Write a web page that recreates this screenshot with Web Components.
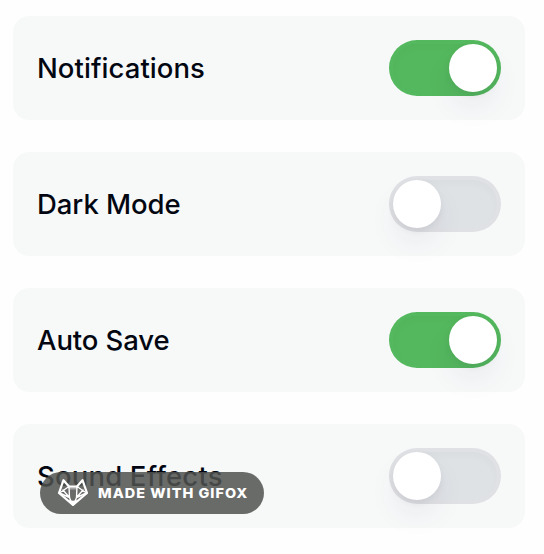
<!DOCTYPE html>
<html lang="en">
<head>
<meta charset="utf-8">
<title>Settings</title>
<style>
html, body { margin: 0; height: 100%; background: #fefefe; overflow: hidden; }
body { font-family: Inter, "Liberation Sans", sans-serif; color: #030712; }
</style>
</head>
<body>
<settings-panel>
  <setting-row on style="--track:.06px">Notifications</setting-row>
  <setting-row style="--track:-.05px">Dark Mode</setting-row>
  <setting-row on style="--track:-.1px">Auto Save</setting-row>
  <setting-row style="--track:.18px">Sound Effects</setting-row>
  <made-with-badge slot="badge">MADE WITH GIFOX</made-with-badge>
</settings-panel>
<script>
class ToggleSwitch extends HTMLElement {
  constructor() {
    super();
    this.attachShadow({ mode: 'open' }).innerHTML = `
      <style>
        :host { display: flex; box-sizing: border-box; flex: none; width: 112px; height: 56px; padding: 4px;
          border-radius: 28px; background: #e0e1e4; }
        .well { display: flex; flex: 1; border-radius: 24px;
          background: #dfe2e5; box-shadow: inset 0 4px 8px rgba(0,0,0,.025); }
        .knob { width: 48px; height: 48px; border-radius: 50%; background: #fff;
          box-shadow: 0 16px 32px -4px rgba(45,35,85,.09), 0 3px 8px -1px rgba(0,0,0,.07); }
        :host([on]) { background: #54b85e; }
        :host([on]) .well { justify-content: flex-end; background: #54b85e; }
      </style>
      <div class="well"><div class="knob"></div></div>`;
  }
}
customElements.define('toggle-switch', ToggleSwitch);

class SettingRow extends HTMLElement {
  constructor() {
    super();
    this.attachShadow({ mode: 'open' }).innerHTML = `
      <style>
        :host { display: flex; align-items: center; justify-content: space-between; box-sizing: border-box;
          height: 104px; padding: 0 24px; border-radius: 16px; background: #f7f9f9; }
        .label { font-size: 27.5px; font-weight: 500; line-height: 40px; letter-spacing: var(--track); white-space: nowrap; }
      </style>
      <span class="label"><slot></slot></span>
      <toggle-switch></toggle-switch>`;
  }
  connectedCallback() {
    this.shadowRoot.querySelector('toggle-switch').toggleAttribute('on', this.hasAttribute('on'));
  }
}
customElements.define('setting-row', SettingRow);

class MadeWithBadge extends HTMLElement {
  constructor() {
    super();
    this.attachShadow({ mode: 'open' }).innerHTML = `
      <style>
        :host { display: flex; align-items: center; box-sizing: border-box; width: 224px; height: 42px;
          padding-left: 17px; gap: 9px; border-radius: 21px; background: rgba(80,82,80,.85); color: #fff; }
        svg { width: 32px; height: 30px; flex: none; }
        span { display: block; font-size: 13.5px; font-weight: 800; letter-spacing: .95px; line-height: 20px; white-space: nowrap;
          transform: scaleX(1.07); transform-origin: 0 50%; }
      </style>
      <svg viewBox="0 0 32 30" fill="none" stroke="#fff" stroke-linejoin="round" stroke-linecap="round">
        <path d="M11.500 8.500h9l-1.500 3h-6Z" fill="#fff" fill-opacity=".4" stroke="none"/>
        <path d="M6.500 2.200 12 8.500h8L25.500 2.200 30 15 16 26.800 2 15Z" stroke-width="2.200"/>
        <path d="M12 8.500 2.500 15 12.500 19.500 14.500 25M20 8.500 29.500 15 19.500 19.500 17.500 25M6 12 12.500 19.500 12 8.500M26 12 19.500 19.500 20 8.500" stroke-width="1.400"/>
        <path d="m12.500 23 3.500.5 3.500-.5-3.500 4Z" fill="#fff" stroke-width="1.400"/>
      </svg>
      <span><slot></slot></span>`;
  }
}
customElements.define('made-with-badge', MadeWithBadge);

class SettingsPanel extends HTMLElement {
  constructor() {
    super();
    this.attachShadow({ mode: 'open' }).innerHTML = `
      <style>
        :host { display: grid; grid-auto-rows: 104px; gap: 32px; box-sizing: border-box; position: relative;
          width: 544px; height: 554px; padding: 16px 19px 0 13px; }
        ::slotted([slot=badge]) { position: absolute; left: 40px; top: 472px; }
      </style>
      <slot></slot><slot name="badge"></slot>`;
  }
}
customElements.define('settings-panel', SettingsPanel);
</script>
</body>
</html>
